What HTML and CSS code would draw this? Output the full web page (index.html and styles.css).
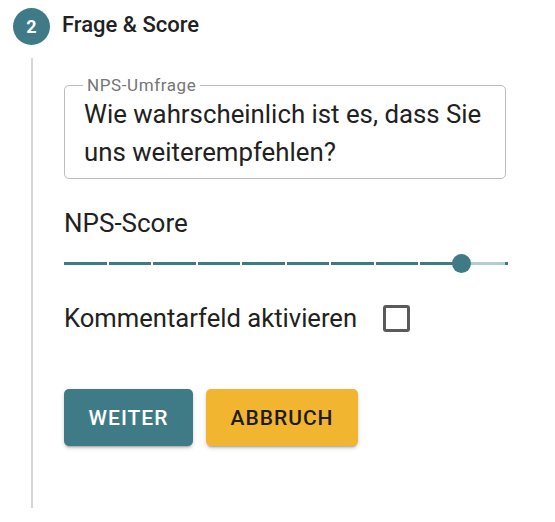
FILE: index.html
```html
<!DOCTYPE html>
<html lang="de">
<head>
<meta charset="utf-8">
<title>Frage &amp; Score</title>
<link rel="stylesheet" href="styles.css">
</head>
<body>
<div class="stepper">
  <div class="step-header">
    <span class="step-num">2</span>
    <span class="step-title">Frage &amp; Score</span>
  </div>
  <div class="step-content">
    <fieldset class="field">
      <legend class="field-label">NPS-Umfrage</legend>
      <div class="field-text">Wie wahrscheinlich ist es, dass Sie uns weiterempfehlen?</div>
    </fieldset>

    <div class="score-label">NPS-Score</div>
    <div class="slider">
      <div class="track">
        <span class="seg on"></span><span class="seg on"></span><span class="seg on"></span>
        <span class="seg on"></span><span class="seg on"></span><span class="seg on"></span>
        <span class="seg on"></span><span class="seg on"></span><span class="seg on"></span>
        <span class="seg off"></span>
        <span class="end-dot"></span>
      </div>
      <span class="thumb"></span>
    </div>

    <label class="check-row">
      <span class="check-text">Kommentarfeld aktivieren</span>
      <span class="checkbox"></span>
    </label>

    <div class="actions">
      <button class="btn btn-primary">Weiter</button>
      <button class="btn btn-warn">Abbruch</button>
    </div>
  </div>
</div>
</body>
</html>
```

FILE: styles.css
```css
* { box-sizing: border-box; }

body {
  margin: 0;
  background: #ffffff;
  font-family: Roboto, "Liberation Sans", sans-serif;
  color: #212121;
}

.stepper {
  width: 555px;
  height: 522px;
}

.step-header {
  display: flex;
  align-items: center;
  padding: 8px 0 0 13px;
  height: 45px;
}

.step-num {
  width: 37px;
  height: 37px;
  border-radius: 50%;
  background: #3f7b87;
  color: #ffffff;
  font-size: 18px;
  font-weight: 700;
  display: flex;
  align-items: center;
  justify-content: center;
}

.step-title {
  margin: 0 0 5px 12px;
  font-size: 22px;
  font-weight: 500;
  color: #212121;
}

.step-content {
  margin: 13px 0 0 31px;
  border-left: 2px solid #d6d6d6;
  padding: 19px 0 62px 31px;
  width: 477px;
}

.field {
  margin: 0;
  border: 1px solid #bdbdbd;
  border-radius: 5px;
  padding: 2px 16px 7px 19px;
  width: 442px;
}

.field-label {
  padding: 0 4px;
  margin-left: -1px;
  font-size: 17px;
  line-height: 16px;
  letter-spacing: 0.6px;
  color: #757575;
}

.field-text {
  font-size: 25.8px;
  line-height: 38px;
  color: #212121;
}

.score-label {
  margin-top: 30px;
  font-size: 26px;
  line-height: 28px;
}

.slider {
  position: relative;
  margin-top: 16px;
  height: 20px;
  width: 444px;
  display: flex;
  align-items: center;
}

.track {
  display: flex;
  gap: 2px;
  width: 443px;
  height: 3px;
  position: relative;
}

.seg { flex: 1; height: 3px; }
.seg.on { background: #3f7b87; }
.seg.off { background: #b3ccd1; }

.end-dot {
  position: absolute;
  right: -1px;
  top: 0;
  width: 3px;
  height: 3px;
  background: #3f7b87;
}

.thumb {
  position: absolute;
  left: 388px;
  top: 0.5px;
  width: 19px;
  height: 19px;
  border-radius: 50%;
  background: #3f7b87;
}

.check-row {
  display: flex;
  align-items: center;
  margin-top: 31px;
  height: 28px;
}

.check-text {
  font-size: 25.6px;
  line-height: 28px;
}

.checkbox {
  margin-left: 26px;
  width: 27px;
  height: 27px;
  border: 3px solid #5a5a5a;
  border-radius: 3px;
}

.actions {
  display: flex;
  gap: 13px;
  margin-top: 57px;
}

.btn {
  height: 57px;
  border: none;
  border-radius: 5px;
  font-family: Roboto, "Liberation Sans", sans-serif;
  font-size: 21px;
  font-weight: 500;
  text-transform: uppercase;
  letter-spacing: 1px;
  box-shadow: 0 3px 2px -2px rgba(0,0,0,0.25), 0 2px 4px rgba(0,0,0,0.18);
  padding: 0;
}

.btn-primary {
  width: 129px;
  background: #3f7b87;
  color: #ffffff;
}

.btn-warn {
  width: 152px;
  background: #f2b530;
  color: #1c1c1c;
}
```
